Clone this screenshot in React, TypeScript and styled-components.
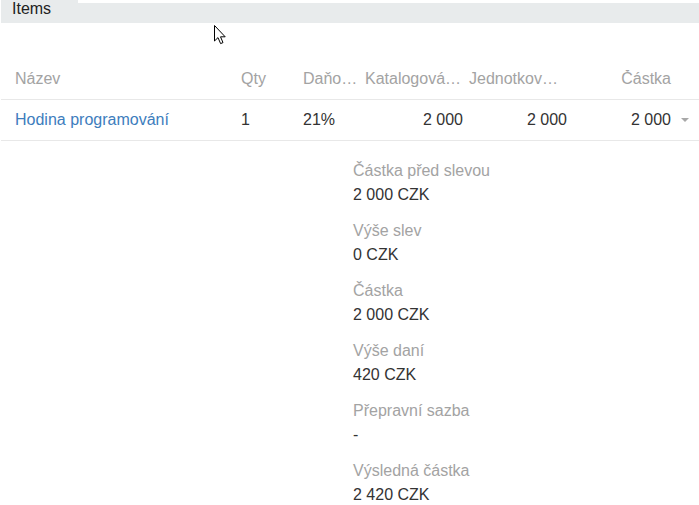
import React from "react";
import styled, { createGlobalStyle } from "styled-components";

const Global = createGlobalStyle`
  html, body { margin: 0; padding: 0; background: #fff; }
  body { font-family: "Liberation Sans", Arial, sans-serif; font-size: 16px; color: #333; }
`;

const Page = styled.div`
  position: relative;
  width: 699px;
  height: 505px;
  overflow: hidden;
  background: #fff;
`;

const TabStrip = styled.div`
  display: flex;
  align-items: flex-end;
  height: 23px;
  padding-left: 1px;
`;

const Tab = styled.div`
  width: 77px;
  height: 23px;
  box-sizing: border-box;
  padding-left: 11px;
  background: #e8ebec;
  color: #222;
  font-size: 16px;
  line-height: 17px;
`;

const TabFill = styled.div`
  flex: 1;
  height: 20px;
  background: #e8ebec;
`;

const Table = styled.div`
  margin-top: 36px;
  margin-left: 1px;
`;

const Row = styled.div<{ $head?: boolean }>`
  display: grid;
  grid-template-columns: 236px 62px 62px 104px 104px 1fr;
  height: 40px;
  align-items: center;
  border-bottom: 1px solid #e8e8e8;
  color: ${(p) => (p.$head ? "#a3a3a3" : "#333")};
  font-size: 16px;
`;

const Cell = styled.div<{ $right?: boolean; $pl?: number; $pr?: number }>`
  box-sizing: border-box;
  padding-left: ${(p) => p.$pl ?? 4}px;
  padding-right: ${(p) => p.$pr ?? 4}px;
  text-align: ${(p) => (p.$right ? "right" : "left")};
  white-space: nowrap;
  overflow: hidden;
  text-overflow: ellipsis;
  position: relative;
`;

const Link = styled.a`
  color: #3d7dbd;
  text-decoration: none;
`;

const Caret = styled.span`
  position: absolute;
  right: 10px;
  top: 50%;
  margin-top: -2px;
  width: 0;
  height: 0;
  border-left: 4px solid transparent;
  border-right: 4px solid transparent;
  border-top: 4px solid #a8a8a8;
`;

const Summary = styled.div`
  padding-left: 353px;
  padding-top: 18px;
  display: flex;
  flex-direction: column;
`;

const Pair = styled.div`
  display: flex;
  flex-direction: column;
  margin-bottom: 12px;
`;

const Label = styled.div`
  line-height: 24px;
  color: #a3a3a3;
  font-size: 16px;
`;

const Value = styled.div`
  line-height: 24px;
  color: #333;
  font-size: 16px;
`;

const Cursor = styled.svg`
  position: absolute;
  left: 213px;
  top: 24px;
`;

const summary: [string, string][] = [
  ["Částka před slevou", "2 000 CZK"],
  ["Výše slev", "0 CZK"],
  ["Částka", "2 000 CZK"],
  ["Výše daní", "420 CZK"],
  ["Přepravní sazba", "-"],
  ["Výsledná částka", "2 420 CZK"],
];

export default function App() {
  return (
    <Page>
      <Global />
      <TabStrip>
        <Tab>Items</Tab>
        <TabFill />
      </TabStrip>
      <Table>
        <Row $head>
          <Cell $pl={14}>Název</Cell>
          <Cell>Qty</Cell>
          <Cell $pr={0}>Daňová sazba</Cell>
          <Cell $pr={0}>Katalogová cena</Cell>
          <Cell $pr={6}>Jednotková cena</Cell>
          <Cell $right $pr={28}>Částka</Cell>
        </Row>
        <Row>
          <Cell $pl={14}>
            <Link href="#">Hodina programování</Link>
          </Cell>
          <Cell>1</Cell>
          <Cell>21%</Cell>
          <Cell $right $pr={2}>2 000</Cell>
          <Cell $right $pr={2}>2 000</Cell>
          <Cell $right $pr={28}>
            2 000
            <Caret />
          </Cell>
        </Row>
      </Table>
      <Summary>
        {summary.map(([l, v]) => (
          <Pair key={l}>
            <Label>{l}</Label>
            <Value>{v}</Value>
          </Pair>
        ))}
      </Summary>
      <Cursor width="14" height="22" viewBox="0 0 14 22">
        <path
          d="M1.5 1.5 L1.5 17 L5 13.6 L7.6 19.6 L10 18.6 L7.5 12.8 L12.2 12.8 Z"
          fill="#fff"
          stroke="#000"
          strokeWidth="1"
          strokeLinejoin="miter"
        />
      </Cursor>
    </Page>
  );
}
